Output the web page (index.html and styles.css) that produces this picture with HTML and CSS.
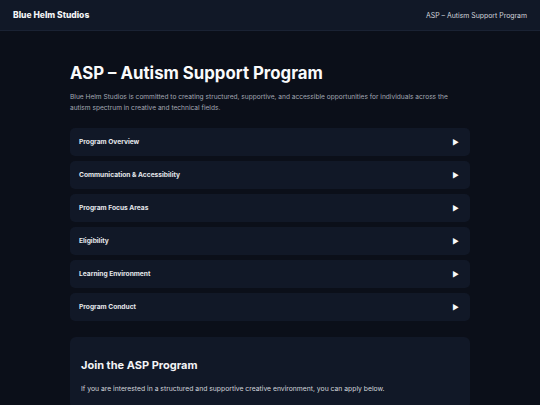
FILE: index.html
```html
<!DOCTYPE html>
<html lang="en">
<head>
<meta charset="utf-8">
<title>ASP – Autism Support Program</title>
<link rel="stylesheet" href="styles.css">
</head>
<body>
<header class="topbar">
  <div class="brand">Blue Helm Studios</div>
  <div class="crumb">ASP – Autism Support Program</div>
</header>
<main class="container">
  <h1 class="title">ASP – Autism Support Program</h1>
  <p class="lead">Blue Helm Studios is committed to creating structured, supportive, and accessible opportunities for individuals across the autism spectrum in creative and technical fields.</p>
  <div class="accordion">
    <div class="item"><span>Program Overview</span><span class="arrow">▶</span></div>
    <div class="item"><span>Communication &amp; Accessibility</span><span class="arrow">▶</span></div>
    <div class="item"><span>Program Focus Areas</span><span class="arrow">▶</span></div>
    <div class="item"><span>Eligibility</span><span class="arrow">▶</span></div>
    <div class="item"><span>Learning Environment</span><span class="arrow">▶</span></div>
    <div class="item"><span>Program Conduct</span><span class="arrow">▶</span></div>
  </div>
  <section class="join">
    <h2 class="join-title">Join the ASP Program</h2>
    <p class="join-text">If you are interested in a structured and supportive creative environment, you can apply below.</p>
  </section>
</main>
</body>
</html>
```
FILE: styles.css
```css
* { box-sizing: border-box; }
html, body { margin: 0; padding: 0; }
body {
  background: #0b0f19;
  color: #e5e7eb;
  font-family: Inter, "Noto Sans", sans-serif;
  width: 540px;
  height: 405px;
  overflow: hidden;
}
.topbar {
  height: 31px;
  background: #111827;
  border-bottom: 1px solid #1a2233;
  display: flex;
  align-items: center;
  justify-content: space-between;
  padding: 0 13px;
}
.brand {
  font-weight: 800;
  font-size: 8.5px;
  color: #f3f4f6;
}
.crumb {
  font-size: 6.9px;
  color: #d1d5db;
}
.container {
  width: 400px;
  margin: 0 auto;
  padding-top: 31px;
}
.title {
  margin: 0;
  font-size: 16.8px;
  font-weight: 700;
  color: #f9fafb;
  line-height: 22px;
}
.lead {
  margin: 8px 0 0;
  max-width: 390px;
  font-size: 6.6px;
  line-height: 11px;
  color: #a3a8b3;
}
.accordion {
  margin-top: 14px;
  display: flex;
  flex-direction: column;
  gap: 5px;
}
.item {
  height: 28px;
  background: #111827;
  border-radius: 5px;
  display: flex;
  align-items: center;
  justify-content: space-between;
  padding: 0 11px 0 9px;
  font-size: 6.65px;
  font-weight: 700;
  color: #e5e7eb;
}
.arrow {
  font-size: 7px;
  color: #f9fafb;
}
.join {
  margin-top: 16px;
  background: #111827;
  border-radius: 6px;
  padding: 21px 11px 16px;
}
.join-title {
  margin: 0;
  font-size: 11px;
  font-weight: 700;
  color: #f3f4f6;
}
.join-text {
  margin: 12px 0 0;
  font-size: 6.8px;
  color: #d1d5db;
}
```
